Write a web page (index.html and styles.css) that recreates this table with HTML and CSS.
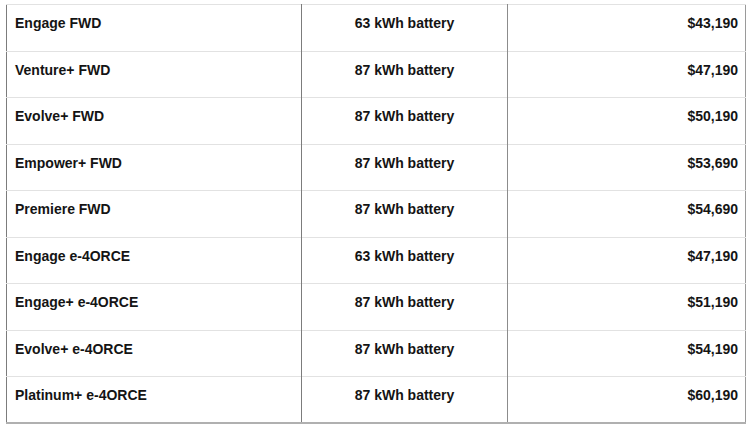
FILE: index.html
```html
<!DOCTYPE html>
<html>
<head>
<meta charset="utf-8">
<link rel="stylesheet" href="styles.css">
</head>
<body>
<table class="prices">
  <tbody>
    <tr><td class="trim">Engage FWD</td><td class="bat">63 kWh battery</td><td class="price">$43,190</td></tr>
    <tr><td class="trim">Venture+ FWD</td><td class="bat">87 kWh battery</td><td class="price">$47,190</td></tr>
    <tr><td class="trim">Evolve+ FWD</td><td class="bat">87 kWh battery</td><td class="price">$50,190</td></tr>
    <tr><td class="trim">Empower+ FWD</td><td class="bat">87 kWh battery</td><td class="price">$53,690</td></tr>
    <tr><td class="trim">Premiere FWD</td><td class="bat">87 kWh battery</td><td class="price">$54,690</td></tr>
    <tr><td class="trim">Engage e-4ORCE</td><td class="bat">63 kWh battery</td><td class="price">$47,190</td></tr>
    <tr><td class="trim">Engage+ e-4ORCE</td><td class="bat">87 kWh battery</td><td class="price">$51,190</td></tr>
    <tr><td class="trim">Evolve+ e-4ORCE</td><td class="bat">87 kWh battery</td><td class="price">$54,190</td></tr>
    <tr><td class="trim">Platinum+ e-4ORCE</td><td class="bat">87 kWh battery</td><td class="price">$60,190</td></tr>
  </tbody>
</table>
</body>
</html>
```
FILE: styles.css
```css
html, body {
  margin: 0;
  padding: 0;
  background: #ffffff;
}
body {
  font-family: "Liberation Sans", Arial, sans-serif;
  color: #141414;
}
.prices {
  margin: 4px 0 0 6px;
  width: 740px;
  border-collapse: collapse;
  table-layout: fixed;
  border-top: 1px solid #e2e2e2;
  border-bottom: 2px solid #b0b0b0;
  border-left: 1px solid #7c7c7c;
  border-right: 1px solid #9a9a9a;
}
.prices tr {
  height: 46.5px;
}
.prices td {
  font-size: 14px;
  font-weight: bold;
  line-height: 16px;
  vertical-align: top;
  padding: 10px 8px 0 8px;
  border-top: 1px solid #e2e2e2;
  box-sizing: border-box;
}
.trim {
  width: 295px;
  text-align: left;
  border-right: 1px solid #7c7c7c;
}
.bat {
  width: 206px;
  text-align: center;
  border-right: 1px solid #8c8c8c;
}
.price {
  text-align: right;
  padding-right: 7px !important;
}
```
